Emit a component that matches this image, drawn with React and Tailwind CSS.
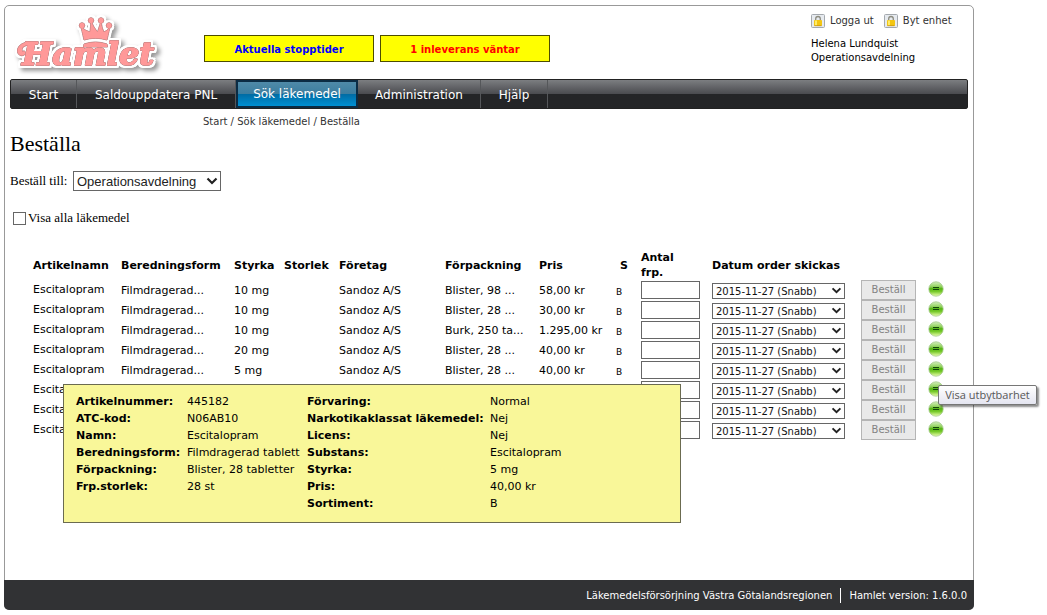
import React from "react";

const navItems = [
  { label: "Start", width: "w-[66px]" },
  { label: "Saldouppdatera PNL", width: "w-[159px]" },
  { label: "Sök läkemedel", width: "w-[122px]", active: true },
  { label: "Administration", width: "w-[123px]" },
  { label: "Hjälp", width: "w-[67px]" },
];

const columns = [
  { label: "Artikelnamn", width: "w-[88px]" },
  { label: "Beredningsform", width: "w-[113px]" },
  { label: "Styrka", width: "w-[50px]" },
  { label: "Storlek", width: "w-[55px]" },
  { label: "Företag", width: "w-[106px]" },
  { label: "Förpackning", width: "w-[94px]" },
  { label: "Pris", width: "w-[77px]" },
  { label: "S", width: "w-[25px]", pad: "pl-1" },
  { label: "Antal frp.", width: "w-[71px]", pad: "pr-6" },
  { label: "Datum order skickas", width: "w-[149px]" },
  { label: "", width: "w-[67px]" },
  { label: "", width: "w-5" },
];

const rows = [
  ["10 mg", "Blister, 98 ...", "58,00 kr"],
  ["10 mg", "Blister, 28 ...", "30,00 kr"],
  ["10 mg", "Burk, 250 ta...", "1.295,00 kr"],
  ["20 mg", "Blister, 28 ...", "40,00 kr"],
  ["5 mg", "Blister, 28 ...", "40,00 kr"],
  ["5 mg", "Blister, 28 ...", "40,00 kr"],
  ["5 mg", "Blister, 28 ...", "40,00 kr"],
  ["5 mg", "Blister, 28 ...", "40,00 kr"],
];

const detailsLeft = [
  ["Artikelnummer:", "445182"],
  ["ATC-kod:", "N06AB10"],
  ["Namn:", "Escitalopram"],
  ["Beredningsform:", "Filmdragerad tablett"],
  ["Förpackning:", "Blister, 28 tabletter"],
  ["Frp.storlek:", "28 st"],
];

const detailsRight = [
  ["Förvaring:", "Normal"],
  ["Narkotikaklassat läkemedel:", "Nej"],
  ["Licens:", "Nej"],
  ["Substans:", "Escitalopram"],
  ["Styrka:", "5 mg"],
  ["Pris:", "40,00 kr"],
  ["Sortiment:", "B"],
];

// The filter chain gives the pink shapes a thin dark rim, a white halo and a soft shadow.
function Logo() {
  return (
    <svg className="h-[70px] w-[180px]" viewBox="5 6 180 70" role="img" aria-label="Hamlet">
      <g
        className="fill-[#ff9999] [filter:drop-shadow(0_0_0.5px_#333)_drop-shadow(2px_0_0_#fff)_drop-shadow(-2px_0_0_#fff)_drop-shadow(0_2px_0_#fff)_drop-shadow(0_-2px_0_#fff)_drop-shadow(3px_3px_2px_rgba(0,0,0,0.4))]"
        stroke="#ff9999"
        strokeLinejoin="round"
      >
        <g strokeWidth="0.5">
          <path d="M84 40 L81 27 Q86 31 90 32 L91 21 Q94 28 97.5 32 L101 21 Q102 29 104 32 Q107 31 110 27 L107 40 Q95.5 36.5 84 40 Z" />
          <circle cx="82" cy="25.500" r="2.700" />
          <circle cx="91" cy="20.500" r="2.700" />
          <circle cx="101" cy="20.500" r="2.700" />
          <circle cx="109" cy="25.500" r="2.700" />
          <path d="M84 44 Q95.5 40 107 44 L107.5 47 L83.500 47 Z" />
        </g>
        <text
          x="22"
          y="65"
          strokeWidth="1.700"
          className="font-['DejaVu_Serif','Liberation_Serif',serif] text-[32px] font-bold italic"
        >
          Hamlet
        </text>
        <path d="M31 42.500 C22 41 16.500 47 17.500 52 C18.500 57 25 56.500 25.500 53 C25.500 50.500 23.500 50.500 22.500 51.500 C20.500 48 25 44.500 31 45.500 Z" strokeWidth="0.5" />
      </g>
    </svg>
  );
}

function LockIcon() {
  return (
    <svg className="size-[14px] shrink-0" viewBox="0 0 14 14" aria-hidden="true">
      <rect x="0.500" y="0.500" width="13" height="13" rx="1" fill="#e6eaef" stroke="#a4a9ae" />
      <path d="M4.700 6.500V4.800a2.300 2.300 0 0 1 4.600 0V6.500" fill="none" stroke="#8d8c80" strokeWidth="1.300" />
      <rect x="3" y="6" width="8" height="6" rx="0.800" fill="#f3c613" />
      <rect x="4" y="6.500" width="2" height="5" fill="#ffec67" />
      <path d="M3.500 11.700h7" stroke="#c08a10" strokeWidth="0.700" />
    </svg>
  );
}

function Chevron({ className }) {
  return (
    <svg className={`pointer-events-none absolute ${className}`} viewBox="0 0 12 8" aria-hidden="true">
      <path d="M1.500 1.500 L6 6 L10.500 1.500" fill="none" stroke="#222" strokeWidth="2.200" />
    </svg>
  );
}

function EqualsIcon() {
  return (
    <svg className="block size-4" viewBox="0 0 16 16" aria-hidden="true">
      <defs>
        <linearGradient id="ball" x1="0" y1="0" x2="0" y2="1">
          <stop offset="0" stopColor="#d5efbd" />
          <stop offset="0.350" stopColor="#8fd05a" />
          <stop offset="0.480" stopColor="#55b312" />
          <stop offset="0.680" stopColor="#78ca2c" />
          <stop offset="1" stopColor="#f0ffb0" />
        </linearGradient>
      </defs>
      <circle cx="8" cy="8" r="7.200" fill="url(#ball)" stroke="#a3c98a" strokeWidth="0.800" />
      <path d="M5 6.500h6M5 8.500h6" stroke="#14480a" strokeWidth="1" />
    </svg>
  );
}

function Details({ items, columnsClass }) {
  return (
    <dl className={`grid content-start ${columnsClass}`}>
      {items.map(([term, value]) => (
        <React.Fragment key={term}>
          <dt className="font-bold whitespace-nowrap">{term}</dt>
          <dd className="whitespace-nowrap">{value}</dd>
        </React.Fragment>
      ))}
    </dl>
  );
}

export default function App() {
  return (
    <div className="flex min-h-screen bg-white py-[5px] pl-1 font-['DejaVu_Sans',Verdana,sans-serif] text-[11px] text-black">
      <div className="flex w-full max-w-[970px] flex-col rounded-[5px] border border-[#999]">
        <header className="flex h-[73px] items-start">
          <a href="#start" className="w-[199px] shrink-0">
            <Logo />
          </a>
          <div className="mt-[29px] flex gap-[6px] text-[10px] font-bold">
            <a href="#stopptider" className="flex h-[27px] w-[170px] items-center justify-center border border-[#4d4d00] bg-[#ffff00] pt-[2px] text-[#0000ff]">
              Aktuella stopptider
            </a>
            <a href="#inleverans" className="flex h-[27px] w-[170px] items-center justify-center border border-[#4d4d00] bg-[#ffff00] pt-[2px] text-[#ff0000]">
              1 inleverans väntar
            </a>
          </div>
          <div className="mt-[7px] ml-auto w-[162px] text-[10px]">
            <div className="flex gap-[10px] text-[#333]">
              <a href="#logga-ut" className="flex items-center gap-[5px] whitespace-nowrap">
                <LockIcon />
                Logga ut
              </a>
              <a href="#byt-enhet" className="flex items-center gap-[5px] whitespace-nowrap">
                <LockIcon />
                Byt enhet
              </a>
            </div>
            <p className="mt-[9px] leading-[14px]">
              Helena Lundquist
              <br />
              Operationsavdelning
            </p>
          </div>
        </header>

        <nav className="mx-[5px] flex h-[30px] rounded-[2px] border border-[#222] bg-linear-to-b from-[#7c7e81] from-0% via-[#4a4b4f] via-50% to-[#242527] to-50% text-[12px] text-white">
          {navItems.map((item) => (
            <a
              key={item.label}
              href={`#${item.label}`}
              className={
                item.active
                  ? `flex items-center justify-center border-2 border-[#0b2c44] bg-[linear-gradient(#4f8aa8,#3c7d9f_50%,#006ba3_50%,#0090d3)] ${item.width}`
                  : `flex items-center justify-center border-r border-[#55575a] pt-px ${item.width}`
              }
            >
              {item.label}
            </a>
          ))}
        </nav>

        <main className="px-[5px]">
          <p className="mt-[6px] ml-[193px] text-[10px] leading-[14px] text-[#333]">
            <a href="#start">Start</a> / <a href="#sok">Sök läkemedel</a> / <a href="#bestalla">Beställa</a>
          </p>
          <h1 className="mt-[2px] font-['Liberation_Serif',serif] text-[22px] leading-[26px]">Beställa</h1>
          <div className="mt-[14px] flex items-center gap-[5px] font-['Liberation_Serif',serif] text-[13px]">
            <label htmlFor="unit" className="w-[58px] whitespace-nowrap">Beställ till:</label>
            <div className="relative">
              <select id="unit" className="block h-[20px] w-[148px] appearance-none border border-[#666] bg-white pl-[3px] font-['Liberation_Sans',sans-serif] text-[13px] text-[#222]">
                <option>Operationsavdelning</option>
              </select>
              <Chevron className="top-[6px] right-[3px] h-2 w-3" />
            </div>
          </div>
          <label className="mt-[19px] flex h-4 items-center gap-[2px] pl-[3px] font-['Liberation_Serif',serif] text-[13px]">
            <input type="checkbox" className="size-[13px] appearance-none border border-[#666] bg-white" />
            Visa alla läkemedel
          </label>

          <div className="relative mt-6 ml-[23px]">
            <table className="w-[891px] table-fixed border-collapse text-left">
              <thead>
                <tr className="h-[30px]">
                  {columns.map((column, i) => (
                    <th key={i} scope="col" className={`p-0 align-middle leading-[15px] font-bold ${column.width} ${column.pad ?? "whitespace-nowrap"}`}>
                      {column.label}
                    </th>
                  ))}
                </tr>
              </thead>
              <tbody>
                {rows.map(([strength, pack, price], i) => (
                  <tr key={i} className="h-5 leading-4 whitespace-nowrap">
                    <td className="p-0">Escitalopram</td>
                    <td className="p-0 pt-[2px]">Filmdragerad...</td>
                    <td className="p-0 pt-[2px]">{strength}</td>
                    <td className="p-0" />
                    <td className="p-0 pt-[2px]">Sandoz A/S</td>
                    <td className="p-0 pt-[2px]">{pack}</td>
                    <td className="p-0 pt-[2px]">{price}</td>
                    <td className="p-0 pt-1 text-[9px]">B</td>
                    <td className="p-0">
                      <input type="text" aria-label="Antal frp." className="block h-[18px] w-[59px] border border-[#666] bg-white px-1" />
                    </td>
                    <td className="p-0 pt-px">
                      <div className="relative w-[133px]">
                        <select aria-label="Datum order skickas" className="block h-4 w-full appearance-none border border-[#666] bg-white pl-[3px] text-[10px] text-[#111]">
                          <option>2015-11-27 (Snabb)</option>
                        </select>
                        <Chevron className="top-1 right-[3px] h-[7px] w-[11px]" />
                      </div>
                    </td>
                    <td className="p-0">
                      <button type="button" disabled className="block h-5 w-[55px] border border-[#b5b5b5] bg-[#e9e9e9] text-[10px] text-[#838383]">
                        Beställ
                      </button>
                    </td>
                    <td className="p-0 pt-px align-top">
                      <button type="button" aria-label="Visa utbytbarhet" className="block">
                        <EqualsIcon />
                      </button>
                    </td>
                  </tr>
                ))}
              </tbody>
            </table>

            <section className="absolute top-[134px] left-[30px] flex h-[139px] w-[618px] gap-2 border border-[#6b6b50] bg-[#f9f799] py-2 pl-3 leading-[17px]">
              <Details items={detailsLeft} columnsClass="w-[223px] grid-cols-[111px_1fr]" />
              <Details items={detailsRight} columnsClass="grid-cols-[183px_1fr]" />
            </section>

            <div role="tooltip" className="absolute top-[135px] left-[905px] flex h-5 w-[99px] items-center justify-center rounded-[2px] border border-[#767676] bg-linear-to-b from-white to-[#e4e5f0] font-['Open_Sans',sans-serif] text-[11px] whitespace-nowrap text-[#575757] shadow-[2px_2px_2px_rgba(0,0,0,0.45)]">
              Visa utbytbarhet
            </div>
          </div>
        </main>

        <footer className="mt-auto -mr-px -mb-px -ml-px flex h-[30px] items-center justify-end rounded-b-[5px] bg-[#313234] pr-[7px] text-[10px] text-white">
          <span className="border-r border-white pr-2">Läkemedelsförsörjning Västra Götalandsregionen</span>
          <span className="pl-2">Hamlet version: 1.6.0.0</span>
        </footer>
      </div>
    </div>
  );
}
